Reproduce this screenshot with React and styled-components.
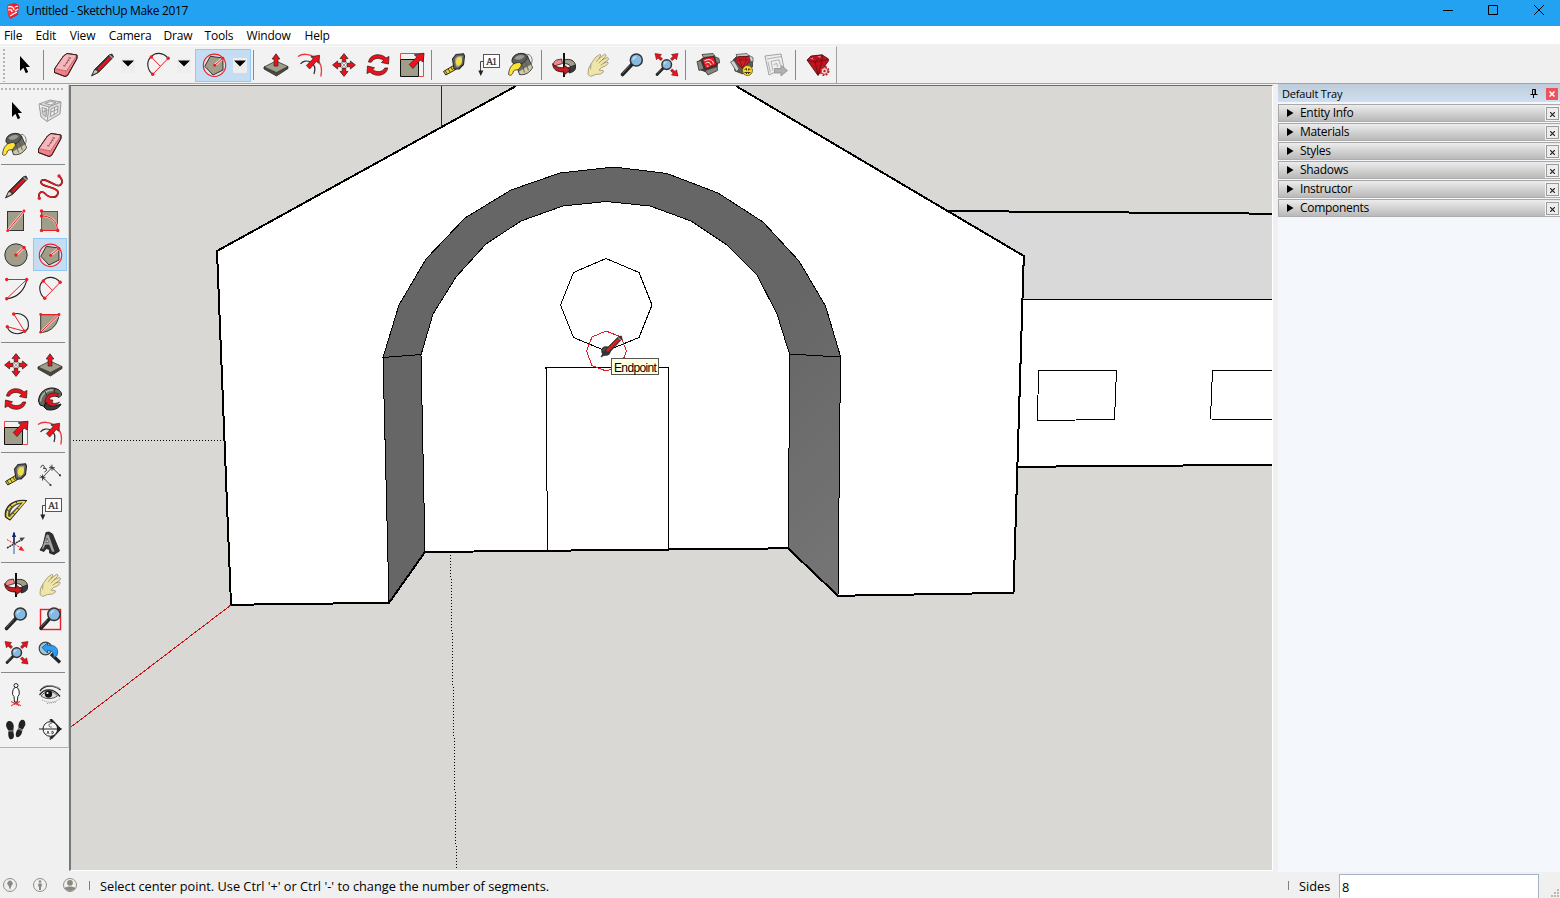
import React from "react";
import styled, { createGlobalStyle, css } from "styled-components";

const Global = createGlobalStyle`
  * { box-sizing: border-box; }
  html, body, #root { margin: 0; padding: 0; height: 100%; }
  body { background: #f0f0f0; overflow: hidden; color: #000; font-family: "Open Sans", "Noto Sans", sans-serif; }
`;

/* ---------- layout ---------- */
const Window = styled.div`
  width: 1560px; height: 898px; display: flex; flex-direction: column; background: #f0f0f0; overflow: hidden;
`;
const TitleBar = styled.header`
  height: 26px; flex: none; display: flex; align-items: flex-start; background: #24a2f2; padding-left: 5px;
`;
const TitleLogo = styled.svg`
  margin-top: 3px;
`;
const Title = styled.span`
  font-size: 12px; line-height: 17px; margin: 2px 0 0 6px; letter-spacing: -0.35px; white-space: pre;
`;
const WindowButtons = styled.div`
  margin-left: auto; display: flex; height: 20px;
`;
const WindowButton = styled.button`
  border: 0; background: none; padding: 0; width: ${(p) => p.$w}px; height: 20px;
  svg { display: block; margin: 0 auto; }
`;
const MenuBar = styled.nav`
  height: 18px; flex: none; display: flex; background: #fff; padding-left: 4px;
`;
const MenuItem = styled.span`
  width: ${(p) => p.$w}px; flex: none; font-size: 12px; line-height: 18px;
  letter-spacing: -0.18px; white-space: pre; margin-top: 1px;
`;
const ToolbarStrip = styled.div`
  height: 40px; flex: none; display: flex; padding-top: 2px; border-bottom: 1px solid #a4a4a4;
`;
const Toolbar = styled.div`
  width: 837px; display: flex; align-items: center; background: #f2f2f2; border-right: 1px solid #a0a0a0; padding-left: 2px;
  border-top: 1px solid #fafafa;
`;
const Grip = styled.i`
  background-image: radial-gradient(#b5b5b5 1px, transparent 1.2px); background-size: 4px 4px; flex: none;
  ${(p) => p.$horizontal
    ? css`height: 4px; width: 65px; margin-top: 1px; margin-bottom: 1px;`
    : css`width: 4px; height: 34px; margin-right: 1px;`}
`;
const Divider = styled.i`
  flex: none; background: #85898b;
  ${(p) => p.$horizontal
    ? css`height: 1px; margin: 2px 0 5px 1px; width: 64px;`
    : css`width: 1px; height: 30px; margin: 0 5px 0 2px;`}
`;
const Tool = styled.button`
  width: 34px; height: 34px; padding: 0; border: 0; background: none; flex: none;
  svg { display: block; width: 34px; height: 34px; overflow: visible; }
  ${(p) => p.$active && css`background: #c5ddf3; box-shadow: inset 0 0 0 1px #90c8f6; height: 33px;`}
`;
const SplitTool = styled.div`
  width: 56px; height: 33px; display: flex; align-items: center; padding-left: 2px; flex: none;
  ${(p) => p.$active && css`background: #c5ddf3; box-shadow: inset 0 0 0 1px #90c8f6;`}
`;
const Caret = styled.span`
  width: 14px; height: 15px; margin: 0 0 0 2px; padding-bottom: 4px; background: #eee; display: flex; align-items: center; justify-content: center;
  svg { display: block; }
`;
const Workspace = styled.main`
  flex: 1; min-height: 0; display: flex;
`;
const SidePalette = styled.aside`
  width: 69px; height: 664px; flex: none; display: flex; flex-direction: column; background: #f2f2f2;
  border-right: 1px solid #d0d0d0; border-bottom: 1px solid #b0b0b0; padding-top: 2px;
`;
const ToolGrid = styled.div`
  display: grid; grid-template-columns: 34px 34px; grid-auto-rows: 34px; margin-left: -1px; flex: none;
  ${(p) => p.$first && css`margin-top: 2px;`}
`;
const Viewport = styled.section`
  position: relative; width: 1204px; height: 786px; flex: none; margin-top: 1px;
  border: solid; border-width: 1px 1px 1px 2px; border-color: #6b6b6b #fff #fff #77787a; background: #d9d8d4;
  > svg { display: block; }
`;
const SnapTip = styled.div`
  position: absolute; left: 540px; top: 272px; width: 48px; height: 17px; border: 1px solid #555; background: #ffffe1;
  font: 12px/18px "Liberation Sans", Arial, sans-serif; letter-spacing: -0.65px; padding-left: 2px; white-space: pre;
`;
const Tray = styled.aside`
  width: 282px; margin-left: 5px; background: #f4f7fc; flex: none; display: flex; flex-direction: column; height: 788px;
`;
const TrayHeader = styled.div`
  height: 18px; flex: none; display: flex; align-items: center; padding: 1px 2px 0 4px; font-size: 11px; letter-spacing: -0.18px;
  background: linear-gradient(#bfccda, #cfdff0); margin-bottom: 2px; white-space: pre;
  svg { margin-left: auto; }
`;
const TrayClose = styled.button`
  width: 12px; height: 12px; border: 0; padding: 0; margin-left: 8px; background: #f0525b;
  svg { display: block; margin: 0 auto; }
`;
const Panel = styled.div`
  height: 18px; margin-bottom: 1px; flex: none; display: flex; align-items: center; padding: 0 1px 0 8px; white-space: pre;
  border-top: 1px solid #a8a8a8; border-left: 1px solid #a8a8a8; border-bottom: 1px solid #adadad;
  background: linear-gradient(#ececec, #b9b9b9); font-size: 12px; letter-spacing: -0.3px;
  > svg { margin-right: 6px; }
`;
const PanelName = styled.span`
  margin-top: -2px;
`;
const PanelClose = styled.button`
  margin-left: auto; width: 13px; height: 13px; border: 1px solid #9b9b9b; background: #ededed; padding: 0; box-shadow: 0 0 0 1px #f4f4f4;
  svg { display: block; margin: 2px auto 0; }
`;
const StatusBar = styled.footer`
  height: 26px; flex: none; display: flex; align-items: center; font-size: 12.75px; white-space: pre;
`;
const StatusIcons = styled.div`
  display: flex; gap: 14px; padding-left: 2px; width: 89px; flex: none;
  svg { display: block; }
`;
const StatusTick = styled.i`
  width: 1px; height: 9px; background: #808080; flex: none;
`;
const StatusText = styled.span`
  width: 1198px; padding-left: 10px; flex: none; padding-top: 1px;
`;
const FieldLabel = styled.label`
  width: 50px; padding-left: 10px; flex: none; padding-top: 1px;
`;
const Field = styled.div`
  width: 200px; height: 24px; align-self: flex-end; border: 1px solid #a4b4c4; border-bottom: 0; background: #fff; padding: 4px 0 0 2px; line-height: 16px;
`;
const ResizeGrip = styled.div`
  margin-left: auto; align-self: flex-end; padding-right: 1px;
  svg { display: block; }
`;

/* ---------- icons: each is drawn on a 34 × 34 grid ---------- */
const RED = "#ee1c25";
const STONE = "#a09d88";
const dot = (x, y, r = 1.7) => <circle cx={x} cy={y} r={r} fill={RED} key={`${x}-${y}`} />;

const Lens = ({ cx, cy, r, hx, hy, grip = 3.6 }) => (
  <g>
    <path d={`M${cx - r * 0.7} ${cy + r * 0.7}L${hx} ${hy}`} stroke="#222" strokeWidth={grip} strokeLinecap="round" />
    <path d={`M${cx - r * 0.9 - 1} ${cy + r * 0.9}L${hx} ${hy - 1}`} stroke="#777" strokeWidth="0.8" />
    <circle cx={cx} cy={cy} r={r} fill="#86b9df" stroke="#333" strokeWidth="1.5" />
    <path d={`M${cx - r * 0.5} ${cy}a${r * 0.5} ${r * 0.5} 0 0 1 ${r * 0.5} ${-r * 0.5}`} stroke="#c4def2" fill="none" strokeWidth="1.3" />
  </g>
);
const CornerArrow = () => (
  <path d="M29 5.2L28.2 14L25.2 12L18 20.5L14.3 16.5L21.8 9L19.3 6.8Z" fill="#f0101c" stroke="#333" strokeWidth="0.9" />
);
const Cardinal = ({ angle }) => (
  <path transform={`rotate(${angle} 17 17)`} d="M17 5.6L21 10.6H18.7V14H15.3V10.6H13Z" fill="#f0101c" stroke="#35281f" strokeWidth="0.8" />
);

const icons = {
  select: <path d="M13 8V23L16.4 19.8L18.8 25.2L21.2 24L18.8 19H23Z" fill="#000" />,
  component: (
    <g fill="#ddd" stroke="#939393" strokeWidth="0.9" strokeLinejoin="round">
      <path d="M6 10L17 6L28 8L27 20L14 27.5L8 23Z" />
      <path d="M6 10L16 13L14 27.5M16 13L28 8M9 13.5L14 15L13 23L10 20.5ZM18 15L25 12L24.5 18.5L17.5 22.5ZM12 9.5L18 11L23 8.5L17.5 7.5Z" fill="#f0f0f0" />
      <path d="M10 18L14 16M18 18L25 15M12 14.5L12 22M21.500 14L21 20" />
    </g>
  ),
  paint: (
    <g stroke="#292929" strokeLinejoin="round">
      <path d="M20 8C24 3 29.500 11 26 16" fill="none" stroke="#777" />
      <path d="M9.500 11.500L22.500 8L27.500 19.500C25 25 19 27.500 14.500 26.500Z" fill="#716f64" strokeWidth="0.9" />
      <path d="M14 23.500L26 16.500L27.200 19.500C24.500 25 18.500 27 15 26Z" fill="#cdc9a6" stroke="none" />
      <path d="M17 16L19.500 24.500M20.500 14L23.500 22.500" stroke="#54534b" strokeWidth="0.8" />
      <path d="M7 12C8 6 16 3.800 21 6.500C24.500 9.500 20 14.500 15.500 16.200C10.500 17.500 6.500 16 7 12Z" fill="#5b5b58" strokeWidth="1" />
      <path d="M9.500 10.500C11 6.800 17 6 19.500 7.800C19 11 12.500 13.500 9.500 10.5Z" fill="#9a9a94" stroke="none" />
      <path d="M14.500 14.500C8 14.500 4.200 18.500 3.500 26.500C5 28 7.500 27.500 8.500 23C10 21 13.500 23 15 19.500C17 17.500 16.500 15.500 14.5 14.5Z" fill="#ffe433" strokeWidth="0.8" />
    </g>
  ),
  eraser: (
    <g stroke="#3b2224" strokeLinejoin="round" strokeWidth="1">
      <path d="M14.5 8L18 5.5L28 7V10.5L18.5 27.5L16 28.5L5.5 24.5V21Z" fill="#f18088" />
      <path d="M14.5 8L18 5.5L28 7L17.5 23L5.5 20.5Z" fill="#f7b6ba" stroke="#90585c" strokeWidth="0.6" />
      <path d="M17.5 23L16.5 28" stroke="#c66" strokeWidth="0.6" />
      <path d="M14.5 8L18 5.5L28 7V10.5L18.5 27.5L16 28.5L5.5 24.5V21Z" fill="none" />
      <path d="M21 9.500L15.500 18M19.500 9.700L22 10.300M14 17.500L16.500 18.300M18.5 12l2 1M17 14.500l2 .5" stroke="#80484b" strokeWidth="0.8" fill="none" />
    </g>
  ),
  pencil: (
    <g strokeLinejoin="round">
      <path d="M6.5 28L9.5 21.5L24 7L27 6L28.5 9L13.5 24.5Z" fill="#333" stroke="#222" strokeWidth="0.8" />
      <path d="M12 21L24.5 8.5L27 9.5L14 23Z" fill="#db1a22" />
      <path d="M9.3 22.8L11 22L12.8 24L8 26.6Z" fill="#d6c9ab" />
      <path d="M24.6 7.2L27.8 10" stroke="#aaa" strokeWidth="1.2" />
    </g>
  ),
  freehand: (
    <g>
      <path d="M26 6C32 12 28 17 23 15C16 12 9 7 8 12C7 17 26 17 25 23C24 29 16 28 12 23.5C8 20 5 23 6.3 28" fill="none" stroke="#4a1512" strokeWidth="1.8" />
      <path d="M26 6C32 12 28 17 23 15C16 12 9 7 8 12C7 17 26 17 25 23C24 29 16 28 12 23.5C8 20 5 23 6.3 28" fill="none" stroke={RED} strokeWidth="1.2" />
      {dot(26, 6)}{dot(6.3, 28.3)}
    </g>
  ),
  rectangle: (
    <g>
      <rect x="8.5" y="7.5" width="16" height="19" fill={STONE} stroke="#333" />
      <path d="M8.7 26.7L25 7" stroke="#ffd5d3" strokeWidth="2.4" /><path d="M8.7 26.7L25 7" stroke={RED} />
      {dot(8.7, 26.7, 1.4)}{dot(25, 7, 1.4)}
    </g>
  ),
  rotatedRect: (
    <g>
      <rect x="8.5" y="7.5" width="16" height="19" fill={STONE} stroke="#555" />
      <path d="M8.3 12C17 12 24 16 25 27" fill="none" stroke="#ffc7c5" strokeWidth="2.2" />
      <path d="M8.5 7V26.500H24.500C24 16 17 12 8.5 12" fill="none" stroke={RED} />
      {dot(8.5, 7)}{dot(8.5, 12)}{dot(8.5, 26.5)}{dot(24.700, 26.5)}
    </g>
  ),
  circle: (
    <g>
      <circle cx="17" cy="17" r="11.2" fill={STONE} stroke="#333" />
      <path d="M17 17L25 9.5" stroke="#ffd5d3" strokeWidth="2.6" /><path d="M17 17L25 9.5" stroke={RED} />
      {dot(17, 17)}{dot(25, 9.5)}
    </g>
  ),
  polygon: (
    <g>
      <circle cx="17.5" cy="17.3" r="11.2" fill="#e3dfe6" stroke={RED} strokeWidth="1.1" />
      <path d="M25.800 10L26 22L16 27L7.800 18.3L13.3 8.300Z" fill={STONE} stroke="#333" />
      <path d="M17.7 17.3L25.8 10.2" stroke="#ffd5d3" strokeWidth="2.6" /><path d="M17.7 17.3L25.8 10.2" stroke={RED} />
      {dot(17.7, 17.3, 1.5)}{dot(25.8, 10.2, 1.5)}
    </g>
  ),
  arc: (
    <g fill="none">
      <path d="M27.7 7.3C26 18 18 26 7.7 26.7" stroke="#222" strokeWidth="1.1" />
      <path d="M7.7 7.500H27.7L7.7 26.7" stroke={RED} />
      {dot(7.7, 7.5)}{dot(27.7, 7.5)}{dot(7.7, 26.7)}
    </g>
  ),
  arc2: (
    <g fill="none">
      <path d="M27.2 10.3C22 4 14 4 10 9C5 13 6 22 11.7 26.3" stroke="#222" strokeWidth="1.1" />
      <path d="M10.3 9L19.4 18.3M27.2 10.3L11.7 26.3" stroke={RED} />
      {dot(10.3, 9)}{dot(27.2, 10.3)}{dot(11.7, 26.3)}
    </g>
  ),
  arc3: (
    <g fill="none">
      <path d="M14.7 8C22 6 29 11 29.3 17.5C30 22 27.5 24.5 25.7 25.3C19 30 10 27.5 8.3 20.7" stroke="#222" strokeWidth="1.1" />
      <path d="M14.7 8L25.7 25.3L8.3 20.7" stroke={RED} />
      {dot(14.7, 8)}{dot(25.7, 25.3)}{dot(8.3, 20.7)}
    </g>
  ),
  pie: (
    <g>
      <path d="M7.7 8.7H26C25 18 19 26 7.7 26.5Z" fill={STONE} stroke="#333" />
      <path d="M26 8.7L7.7 26.2" stroke="#ffd5d3" strokeWidth="2.2" />
      <path d="M7.7 8.500H26L7.7 26.2" stroke={RED} fill="none" />
      {dot(7.7, 8.5, 1.4)}{dot(26, 8.5, 1.4)}{dot(7.7, 26.2, 1.4)}
    </g>
  ),
  move: <g>{[0, 90, 180, 270].map((a) => <Cardinal angle={a} key={a} />)}<path d="M14 14L20 20M20 14L14 20" stroke="#777" strokeWidth="0.7" /></g>,
  pushPull: (
    <g strokeLinejoin="round">
      <path d="M5 19V21L17.5 28L29 20.500V18.5Z" fill="#4a493f" stroke="#292929" strokeWidth="0.8" />
      <path d="M5 19L17 13L29 18.500L17.5 24.5Z" fill={STONE} stroke="#333" strokeWidth="0.8" />
      <path d="M17 5.8L20.800 11H18.900V18H15.100V11H13.200Z" fill="#f0101c" stroke="#35281f" strokeWidth="0.8" />
    </g>
  ),
  rotate: (
    <g fill="#f0101c" stroke="#42201a" strokeWidth="0.8" strokeLinejoin="round">
      <path d="M7.5 14C9 5.500 20 4.8 25 10L28 8.5L27.5 16L20.500 14.5L22.600 12.3C18 9.300 12.5 9.800 10.3 14.2Z" />
      <path d="M26.8 20C25 28.500 14 29.2 9 24L6 25.5L6.5 18L13.5 19.8L11.600 21.7C16 24.700 21.5 24.2 23.8 20Z" />
    </g>
  ),
  followMe: (
    <g strokeLinejoin="round">
      <path d="M5.500 19C6 10 13 5.500 20 6C25 6.500 29 9.500 28.500 13L26 15.500C22 13 17 13 14 16.500L11.500 24.500L7 23Z" fill="#66665f" stroke="#111" />
      <path d="M11 25L13 20C14 23 18 25 22 24L28 22C26 27 19 29 13.500 27.500Z" fill="#3b3b38" stroke="#111" />
      <path d="M7.500 19.500C8 12.500 13.500 8 20 8" stroke="#b1b0a5" strokeWidth="1.4" fill="none" />
      <path d="M12 9.500L14 14M22 6.500L21 11" stroke="#222" strokeWidth="0.8" />
      <path d="M13 16C15 11.500 20 10 25.500 11.500L24.500 14.500C20 13.500 17 15 16 17.500L20 18.200L19 20.500C21 22 24 21.500 26.500 20C23 25 16 25 13.500 20.500L11.500 20Z" fill="#d9161d" stroke="#4a1512" strokeWidth="0.7" />
    </g>
  ),
  scale: (
    <g>
      <path d="M5.500 11V5.5H28.5V28.5H24" fill="none" stroke="#f0444a" />
      <path d="M5.500 11.5H23.5V28.5H5.500Z" fill={STONE} stroke="#111" />
      <CornerArrow />
    </g>
  ),
  offset: (
    <g fill="none">
      <path d="M5 8.500C14 2 32 10 27.800 28.500" stroke="#f0363d" strokeWidth="1.3" />
      <path d="M7.500 16C12 9.500 25 14 21 26" stroke="#2c2c2c" strokeWidth="1.2" />
      <g transform="translate(0.5 2.600) scale(.9)"><CornerArrow /></g>
    </g>
  ),
  tape: (
    <g strokeLinejoin="round">
      <path d="M16.500 17.500L6.500 23.5L8.8 27L19.500 21Z" fill="#e8d33a" stroke="#292915" />
      <path d="M8 22.500L10.300 26M11 20.8L13 24M14 19L15.5 22" stroke="#292915" strokeWidth="0.8" />
      <path d="M15.500 11L19 6.5L26.500 5.8L27.500 8L26.500 16.500L22 21H17Z" fill="#6c6b63" stroke="#222" strokeWidth="1.1" />
      <path d="M17.500 11L20 8L26 7.300L25 16L21.5 19.3L18.500 19Z" fill="#aaa996" stroke="#444" strokeWidth="0.6" />
      <ellipse cx="22" cy="13.2" rx="2.900" ry="4.3" fill="#f0df43" transform="rotate(18 22 13)" />
    </g>
  ),
  dimension: (
    <g stroke="#333" fill="none">
      <path d="M9.5 19.5L19 9.5M9 18.5L17.5 27M18.5 9L27 17.3" strokeWidth="0.9" />
      <path d="M6.5 19.3H12.5M9.5 16.5V22.5M7.5 17.5L11.5 21.5M16 9.7H22M19 6.7V12.7M17 7.7L21 11.7" strokeWidth="0.9" />
      <path d="M7.500 9.500L9.500 7L11.500 8.500L10.500 10.500L13 10.300L13.500 12.500L11.500 14" strokeWidth="1" />
      <circle cx="17.5" cy="27" r="1.1" fill="#333" stroke="none" /><circle cx="27" cy="17.3" r="1.1" fill="#333" stroke="none" />
    </g>
  ),
  protractor: (
    <g strokeLinejoin="round">
      <path d="M27.5 8.5C15 7 4.5 14 6.5 25L11 28Z" fill="#625d3c" stroke="#222" strokeWidth="1.1" />
      <path d="M25.500 9.800C17 8.8 6.8 14.5 8.300 24.5L10.8 26.3Z" fill="none" stroke="#f0dc45" strokeWidth="1.5" />
      <path d="M22.500 11.3C16 12 10.5 17 10.5 23Z" fill="#f2f2f2" stroke="#333" strokeWidth="0.8" />
      <path d="M17 9.5L18 11.5M11 13L13 15M8 18L10 19M14 21L16 22.5M18 16L20 17.5" stroke="#222" strokeWidth="0.8" />
    </g>
  ),
  text: (
    <g>
      <path d="M12 13.5H9.500V23" stroke="#444" fill="none" />
      <path d="M7.3 22.5H12.3L9.8 28Z" fill="#222" />
      <rect x="12.5" y="6.5" width="16" height="13" fill="#fdfdfd" stroke="#555" />
      <text x="15" y="16.5" fontFamily="Liberation Serif, serif" fontSize="10" fill="#222" stroke="#222" strokeWidth="0.2" textLength="11">A1</text>
    </g>
  ),
  axes: (
    <g fill="none">
      <path d="M15 6V28" stroke="#8faac9" strokeWidth="2" />
      <path d="M15 7V18" stroke="#23304a" strokeWidth="1.6" /><path d="M12.8 11L15 6L17.2 11Z" fill="#12246d" />
      <path d="M8 22L23 13.5" stroke="#333" strokeWidth="1.5" strokeDasharray="2 .6" /><path d="M26 11.5L20.5 11.8L22.5 15.5Z" fill="#444" />
      <path d="M8 13.5L22 22" stroke={RED} strokeDasharray="2 1" /><path d="M25.5 25L19.5 24L22 20Z" fill={RED} />
    </g>
  ),
  text3d: (
    <g strokeLinejoin="round">
      <path d="M13 6.500L16 6L19.500 8L26.500 25L21 28.500L16.500 27V23.500L13 22.500L11 25.500L7 24L10 19.500Z" fill="#303030" stroke="#161616" strokeWidth="0.8" />
      <path d="M13.500 8L16 8.5L22 26L18.800 26L16 19H12.500L10.5 23.300H8.500Z" fill="#a5a39b" stroke="#222" strokeWidth="0.6" />
      <path d="M14 12L15.500 16.5H13Z" fill="#eee" stroke="#222" strokeWidth="0.5" />
    </g>
  ),
  orbit: (
    <g strokeLinejoin="round">
      <path d="M17 5V29" stroke="#111" strokeWidth="2" />
      <path d="M17 12C23 10 28.500 13 28.500 18L24 20.500C24 17.500 21 15.5 17 15.500Z" fill={STONE} stroke="#222" strokeWidth="0.9" />
      <path d="M21.5 19.500L28.5 17V20.500C28 23 25 24.500 22 25Z" fill="#39393e" stroke="#222" strokeWidth="0.9" />
      <path d="M14.5 11L9.500 12C6.500 13.500 6 16 7 18L15.5 15.500Z" fill="#ee8b90" stroke="#351716" strokeWidth="0.8" />
      <path d="M5.8 15.5C6 18 11 19.800 17 19.800V17L23.5 21.8L17 27V24C10 24 5.5 21.500 5.8 15.5Z" fill="#c81c20" stroke="#2b1313" strokeWidth="0.9" />
      <path d="M17 5V17" stroke="#111" strokeWidth="2" />
    </g>
  ),
  pan: (
    <g stroke="#8a8264" strokeWidth="0.7" strokeLinejoin="round" strokeLinecap="round">
      <path d="M7 26L7.500 20.5L10.500 15L14.500 9.500L18.500 6.500L20 7L18 10.500L23.500 6.300L25 7L24.500 8.500L21 12L26.500 9.300L27.500 10.500L27 12L22.8 15L26.800 14L27 15.500L24.500 18L20.500 19.500L18 22L22 22.500L22.500 24L19.500 26L14.500 26.500L10 28.300Z" fill="#efe5a8" />
      <path d="M18 10.500L15.500 13.500M21 12L18 15M22.800 15L20 17M10 17L9.500 21" fill="none" />
    </g>
  ),
  zoom: <Lens cx={21.3} cy={12} r={6} hx={7.5} hy={26.5} />,
  zoomWindow: <g><rect x="7.500" y="7.500" width="20" height="20" fill="none" stroke={RED} strokeWidth="1.4" /><Lens cx={21} cy={12.3} r={6.2} hx={8} hy={26} /></g>,
  extents: (
    <g>
      <Lens cx={17.700} cy={16.600} r={4.8} hx={8} hy={26.500} grip={2.8} />
      {["M6 5.500L12.500 6.500L11 8.200L13.500 11L11.800 12.500L9 10L7.500 11.800Z", "M29 5.500L22.500 6.500L24 8.200L21.500 11L23.200 12.500L26 10L27.500 11.800Z", "M29 28L22.500 27L24 25.200L21.500 22.700L23.200 21L26 23.500L27.500 21.800Z"].map((d) => (
        <path key={d} d={d} fill="#ec111c" stroke="#5d1614" strokeWidth="0.6" />
      ))}
    </g>
  ),
  previous: (
    <g strokeLinejoin="round">
      <circle cx="12.500" cy="12.500" r="6.300" fill="#a5c6d8" stroke="#444" strokeWidth="1.2" />
      <path d="M18 18L27 26.500" stroke="#222" strokeWidth="3.200" />
      <path d="M9 11.500L14.500 6.800V9.300C21.500 8.300 26.500 12 24 19.500L20.500 21.500C20.800 16.500 19 14.500 14.500 14.500V17Z" fill="#2d9bef" stroke="#174e80" strokeWidth="0.8" />
    </g>
  ),
  position: (
    <g>
      <path d="M12 28L17 24.500L22 28M12 23.500L20 27.500M21 23.500L15 26.500" stroke={RED} strokeWidth="1" />
      <path d="M16.500 9.500C13.8 10 13.600 13 13.600 16.500L15 18.500L15.500 24H18.2L18.800 18.500L20.2 16.500C20.3 13 20 10 17.5 9.500Z" fill="#fff" stroke="#222" />
      <circle cx="17" cy="7.500" r="2" fill="#fff" stroke="#222" />
    </g>
  ),
  look: (
    <g fill="none">
      <path d="M7 13C12 6 22 7.500 27.500 12M6.5 17C12 9.500 21 10.500 27 18.500" stroke="#222" strokeWidth="1.3" />
      <path d="M10 9C16 5.500 23 8.500 27 10.500" stroke="#8d8d8d" strokeWidth="1.1" />
      <path d="M8 18C13 11.500 20 12 24.5 18C19 21.500 13 21.500 8 18Z" fill="#ddd" stroke="#333" strokeWidth="0.8" />
      <circle cx="15.500" cy="16" r="3.700" fill="#111" /><circle cx="14.500" cy="15" r="1.1" fill="#fff" />
      <path d="M9 22C16 25.500 23 24.500 27.500 20M14 25.500L24 24" stroke="#999" strokeWidth="1" strokeDasharray="1 1" />
    </g>
  ),
  walk: (
    <g fill="#222">
      <path d="M7.500 11C9.500 7.500 14 9 14.800 14L14.3 18.500H9.300C7.300 15.500 6.500 13 7.500 11ZM9.300 20L14 19.500C15.800 23.500 15 27 12.3 27.300C9.800 27.500 9 24 9.300 20Z" />
      <path d="M20.8 9.500C23 6.3 27 7.8 26.3 13L23.8 17.500L19.500 15.800C19.3 13 19.800 10.800 20.8 9.5ZM18.8 17.300L23.2 19C22.500 24.500 18.500 26.500 17 24.300C16.2 22 17.3 19 18.8 17.3Z" />
      <path d="M9.500 19.300H14.500M19 16.700L23.500 18.300" stroke="#555" strokeWidth="1.400" />
    </g>
  ),
  section: (
    <g stroke="#222" fill="none">
      <path d="M18.5 7L28 17L18.5 27Z" fill="#222" /><circle cx="17.3" cy="17" r="7.3" fill="#f6f6f6" />
      <path d="M6 17H29M17.3 9.4V7M17.3 24.6V28" strokeWidth="1.1" />
      <path d="M18.8 11.7C15 10.5 15 16 18.8 15M14 22L15 19L16 22M19 19V22L21 20.5Z" strokeWidth="0.7" />
    </g>
  ),
  warehouse: (
    <g strokeLinejoin="round">
      <path d="M8 13L12 10L23 8.500L27 12L26 20L18 25L10 22Z" fill="#3d3d3a" stroke="#222" strokeWidth="0.8" />
      <path d="M11 6.500L22 5.500L24 8L12.500 9.500Z" fill="#a4a49c" stroke="#333" strokeWidth="0.8" />
      <path d="M6 13.500L10 12.500L13 21L8 22.500ZM14 22.500L26 18.500L26.500 22.500L17 27ZM23.500 8.500L28 10.500L28.500 15L25.500 15Z" fill="#85867d" stroke="#333" strokeWidth="0.8" />
      <path d="M11 10.8L22.500 8.5L25.500 16.500L14.500 21Z" fill="#e51d29" stroke="#541316" strokeWidth="0.8" />
      <path d="M13.500 12.800C18 10.500 21.500 11.500 22.500 15.500M14.5 15.300C17 13.500 19 14.500 20 17M15.800 17.800L17.500 18.300" stroke="#fff" fill="none" strokeWidth="1" />
    </g>
  ),
  extension: (
    <g strokeLinejoin="round">
      <path d="M8 12L12 8L24 7.500L27.500 12V19L18 26L10 23Z" fill="#5c5c56" stroke="#333" strokeWidth="0.8" />
      <path d="M11 6.500L22 5.500L24 8L12.500 9.500Z" fill="#c9c9c4" stroke="#444" strokeWidth="0.7" />
      <path d="M9.500 12L13.500 8.500H23.500L26.500 12L17.500 20.500Z" fill="#d71922" stroke="#501316" strokeWidth="0.8" />
      <path d="M9.500 12H26.500M13.500 8.500L17.500 20.500L21.500 12L20 8.500L14 12" stroke="#70151a" fill="none" strokeWidth="0.7" />
      <path d="M5.5 14L9 12.5L14 21L11.500 23.5ZM24 7.500L28 9.500L28 14L25.500 13.500Z" fill="#d2d2cf" stroke="#444" strokeWidth="0.7" />
      <circle cx="22.500" cy="22.500" r="5" fill="#f5d52b" stroke="#604c10" strokeWidth="0.8" />
      <path d="M19.500 21.5L21.500 20.5V22.500M23.500 22.500V20.800L25.500 21.5M19.500 24.500H25.500M21.500 24.500V26M23.500 24.500V26" stroke="#312a16" fill="none" strokeWidth="0.9" />
    </g>
  ),
  layout: (
    <g strokeLinejoin="round">
      <path d="M6 8L22 6L25 20L10 27Z" fill="#eee" stroke="#999" strokeWidth="0.9" />
      <path d="M8 11L22.300 8.500M12 13.500L20 11.800L21.5 17.500M12 13.500L14 22.500M14.500 16.500L18 15.5L18.5 19M9 14L11.500 24.500" stroke="#aaa" fill="none" strokeWidth="0.9" />
      <path d="M15.5 20.5H22V17.500L28.500 22.5L22 28V25H15.5Z" fill="#b0b0ac" stroke="#949494" strokeWidth="0.9" />
    </g>
  ),
  gem: (
    <g strokeLinejoin="round">
      <path d="M6 12L10 8L21 6.8L27.500 11L27 13.500L17 27.500Z" fill="#c2101d" stroke="#4e1117" strokeWidth="0.9" />
      <path d="M6 12L14 14L27.500 11.500M10 8L14 14L17 27L21 13L21.500 7L14 14M16 7.300L21 13" stroke="#690f16" fill="none" strokeWidth="0.8" />
      <path d="M9 10.800L11.500 9.300L12.800 12ZM16 8L20 8L19 10.500Z" fill="#ef6a73" />
      <circle cx="23.5" cy="23" r="4.2" fill="none" stroke="#b82026" strokeWidth="1.6" strokeDasharray="1.900 1.400" />
      <circle cx="23.5" cy="23" r="3.3" fill="#fbd8d9" stroke="#b82026" strokeWidth="0.9" /><circle cx="23.5" cy="23" r="1.2" fill="#b82026" />
    </g>
  ),
};

const Icon = ({ name }) => <svg viewBox="0 0 34 34" fill="none">{icons[name]}</svg>;

const topItems = [
  { icon: "select" }, null,
  { icon: "eraser" }, { icon: "pencil", menu: true }, { icon: "arc2", menu: true }, { icon: "polygon", menu: true, active: true }, null,
  { icon: "pushPull" }, { icon: "offset" }, { icon: "move" }, { icon: "rotate" }, { icon: "scale" }, null,
  { icon: "tape" }, { icon: "text" }, { icon: "paint" }, null,
  { icon: "orbit" }, { icon: "pan" }, { icon: "zoom" }, { icon: "extents" }, null,
  { icon: "warehouse" }, { icon: "extension" }, { icon: "layout" }, null,
  { icon: "gem" },
];
const sideGroups = [
  ["select", "component", "paint", "eraser"],
  ["pencil", "freehand", "rectangle", "rotatedRect", "circle", "polygon", "arc", "arc2", "arc3", "pie"],
  ["move", "pushPull", "rotate", "followMe", "scale", "offset"],
  ["tape", "dimension", "protractor", "text", "axes", "text3d"],
  ["orbit", "pan", "zoom", "zoomWindow", "extents", "previous"],
  ["position", "look", "walk", "section"],
];
const menus = [["File", 31.5], ["Edit", 34.3], ["View", 39], ["Camera", 54.7], ["Draw", 41], ["Tools", 42], ["Window", 58], ["Help", 40]];
const panels = ["Entity Info", "Materials", "Styles", "Shadows", "Instructor", "Components"];

const OUTER = "389,602 383,357.5 399,305 426,259 465,218 511,190 560,173 614,167 667,173.500 718,193 763,222 799,261 825.5,306 840.5,356.500 838,595";
const INNER = "788.5,548 789.5,354 777,314 757,275 727,245 691,221 650,206 606,201.500 563,206 521,221 486,244 456,277 433,314 421,355 425,551";

const Scene = () => (
  <svg width="1201" height="784" viewBox="71 86 1201 784" fill="none" stroke="#000" shapeRendering="crispEdges">
    <defs>
      <linearGradient id="reveal" x1="0" y1="0" x2="1" y2="1">
        <stop offset="0" stopColor="#666" /><stop offset="0.6" stopColor="#666" /><stop offset="1" stopColor="#767676" />
      </linearGradient>
    </defs>
    <path d="M441.5 86V126" stroke="#1818a0" />
    <path d="M948 211L1272 213.5V299H1023Z" fill="#d9d9d9" stroke="none" />
    <path d="M1018 299.5H1272V465L1018 466.5Z" fill="#fff" stroke="none" />
    <path d="M1020 299.5H1272" />
    <path d="M948 211L1272 213.7M1018 466.8L1272 464.8" strokeWidth="2" />
    <path d="M1038.5 370.5H1116.5L1114.5 419.5L1037.5 420.5ZM1272 370.5H1212.5L1210.5 419L1272 419.5" />
    <path d="M516 86L217 251L231 604.5L389 602.5L425 551.5L788 548L838 595.5L1013 592.5L1023.5 256L736 86Z" fill="#fff" stroke="none" />
    <polygon points={`${OUTER} ${INNER}`} fill="url(#reveal)" stroke="none" />
    <polyline points={OUTER} /><polyline points={INNER} />
    <path d="M383 357.5L421 354.5M789 354L840 357" />
    <path d="M516 86L217 251L231 604.8L389 602.8L425 552L788 548.3L838 595.8L1013.5 592.8L1023.8 256L736 86" strokeWidth="2" strokeLinejoin="round" />
    <path d="M547.5 550L546 367.5H668V549" />
    <path d="M606 258.5L639 272.5L652 305L639 337.5L606 351L573.5 337.5L560.5 305L573.5 272.5Z" />
    <path d="M73 440.5H223M450.500 552L456.500 870" strokeDasharray="1 2" />
    <path d="M231 605L71 727" stroke="#c31419" />
    <path d="M606 331L621 337L626.5 351L621 365.500L606 371L592 365.500L586.5 351L592 337Z" stroke="#e71921" />
    <g shapeRendering="auto">
      <circle cx="606" cy="351" r="4" fill="#555" stroke="#333" strokeWidth="1.6" />
      <path d="M601 357L604 351L618 337L621.500 336L622 339L609 353Z" fill="#333" stroke="#333" strokeWidth="0.8" />
      <path d="M607 351L618.500 339.500" stroke="#d32322" strokeWidth="2.8" />
      <path d="M618 337.500L621 340" stroke="#999" strokeWidth="1.2" />
    </g>
  </svg>
);

const CaretMark = () => <Caret><svg width="12" height="7" viewBox="0 0 12 7"><path d="M0 .5H12L6 6.500Z" /></svg></Caret>;

export default function App() {
  return (
    <Window>
      <Global />
      <TitleBar>
        <TitleLogo width="15" height="16" viewBox="0 0 15 16">
          <path d="M2 2L10 0L14 2L13 12L5 16L3 12Z" fill="#e5202b" /><path d="M2 2L10 3L11 10L3 12Z" fill="#f23640" />
          <path d="M3 4C6 3 9 4 9 7M3 7C6 6 7 7 7 9M10 4L13 3M10 8L13 6M5 13L12 9" stroke="#fff" fill="none" strokeWidth="1.300" />
        </TitleLogo>
        <Title>Untitled - SketchUp Make 2017</Title>
        <WindowButtons>
          <WindowButton aria-label="Minimize" $w={40}><svg width="10" height="20"><path d="M0 10.500H10" stroke="#000" /></svg></WindowButton>
          <WindowButton aria-label="Maximize" $w={50}><svg width="10" height="20"><path d="M.5 5.500H9.500V14.500H.5Z" stroke="#000" fill="none" /></svg></WindowButton>
          <WindowButton aria-label="Close" $w={42}><svg width="10" height="20"><path d="M0 5L10 15M10 5L0 15" stroke="#000" /></svg></WindowButton>
        </WindowButtons>
      </TitleBar>
      <MenuBar>
        {menus.map(([label, w]) => <MenuItem key={label} $w={w}>{label}</MenuItem>)}
      </MenuBar>
      <ToolbarStrip>
        <Toolbar>
          <Grip />
          {topItems.map((item, i) => {
            if (!item) return <Divider key={i} />;
            if (item.menu) return <SplitTool key={i} $active={item.active}><Tool><Icon name={item.icon} /></Tool><CaretMark /></SplitTool>;
            return <Tool key={i}><Icon name={item.icon} /></Tool>;
          })}
        </Toolbar>
      </ToolbarStrip>
      <Workspace>
        <SidePalette>
          <Grip $horizontal />
          {sideGroups.map((group, g) => (
            <React.Fragment key={g}>
              {g > 0 && <Divider $horizontal />}
              <ToolGrid $first={g === 0}>
                {group.map((name) => <Tool key={name} $active={name === "polygon"}><Icon name={name} /></Tool>)}
              </ToolGrid>
            </React.Fragment>
          ))}
        </SidePalette>
        <Viewport>
          <Scene />
          <SnapTip>Endpoint</SnapTip>
        </Viewport>
        <Tray>
          <TrayHeader>
            Default Tray
            <svg width="8" height="9" viewBox="0 0 8 9"><path d="M2.500 5V.5H5.500V5M5 .5V5M.5 5.500H7.500M3.500 5.500V9" stroke="#000" fill="none" /></svg>
            <TrayClose><svg width="6" height="6" viewBox="0 0 6 6"><path d="M.5 .5L5.500 5.500M5.500 .5L.5 5.500" stroke="#fff" strokeWidth="1.500" /></svg></TrayClose>
          </TrayHeader>
          {panels.map((name) => (
            <Panel key={name}>
              <svg width="7" height="8" viewBox="0 0 7 8"><path d="M0 0L6.500 4L0 8Z" /></svg>
              <PanelName>{name}</PanelName>
              <PanelClose><svg width="5" height="5" viewBox="0 0 5 5"><path d="M0 0L5 5M5 0L0 5" stroke="#222" strokeWidth="1.200" /></svg></PanelClose>
            </Panel>
          ))}
        </Tray>
      </Workspace>
      <StatusBar>
        <StatusIcons>
          <svg width="16" height="16" viewBox="0 0 16 16"><circle cx="8" cy="8" r="6.500" fill="none" stroke="#918e86" /><path d="M8 13L6.500 8.500A2.600 2.600 0 1 1 9.500 8.500Z" fill="#8b887f" /></svg>
          <svg width="16" height="16" viewBox="0 0 16 16"><circle cx="8" cy="8" r="6.500" fill="none" stroke="#918e86" /><circle cx="8" cy="4.500" r="1.300" fill="#8b887f" /><path d="M6.200 6.500H9.800V9.500H9V13H7V9.500H6.200Z" fill="#8b887f" /></svg>
          <svg width="16" height="16" viewBox="0 0 16 16"><circle cx="8" cy="8" r="6.500" fill="none" stroke="#918e86" /><circle cx="8" cy="5.800" r="2.900" fill="#8b887f" /><path d="M2.500 11C5 9 11 9 13.500 11C11 15 5 15 2.500 11Z" fill="#8b887f" /></svg>
        </StatusIcons>
        <StatusTick />
        <StatusText>Select center point. Use Ctrl '+' or Ctrl '-' to change the number of segments.</StatusText>
        <StatusTick />
        <FieldLabel>Sides</FieldLabel>
        <Field>8</Field>
        <ResizeGrip>
          <svg width="8" height="9" viewBox="0 0 8 9" fill="#b8b8b8"><path d="M6 0h2v2H6zM3 3h2v2H3zM6 3h2v2H6zM0 6h2v2H0zM3 6h2v2H3zM6 6h2v2H6z" /></svg>
        </ResizeGrip>
      </StatusBar>
    </Window>
  );
}
